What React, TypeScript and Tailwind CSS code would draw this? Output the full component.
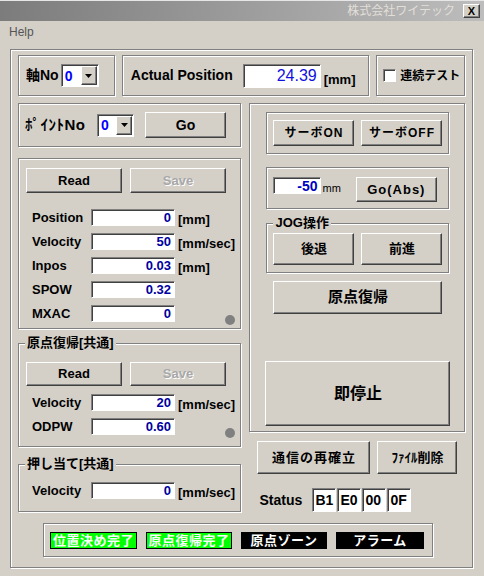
import React from 'react';

const etched = 'border border-[#808080] shadow-[inset_1px_1px_0_#fff,1px_1px_0_#fff]';
const raised =
  'border border-t-white border-l-white border-r-[#404040] border-b-[#404040] shadow-[inset_-1px_-1px_0_#808080] bg-[#d4d0c8]';
const sunken =
  'border border-t-[#808080] border-l-[#808080] border-r-white border-b-white shadow-[inset_1px_1px_0_#404040] bg-white';

type Props = { className?: string; children?: React.ReactNode };

const Group: React.FC<Props & { title?: string }> = ({ title, className = '', children }) => (
  <div className={`relative ${etched} ${className}`}>
    {title && (
      <span className="absolute -top-[8px] left-[6px] bg-[#d4d0c8] px-[2px] text-[13px] leading-[14px] font-bold whitespace-nowrap">
        {title}
      </span>
    )}
    {children}
  </div>
);

const Btn: React.FC<Props & { disabled?: boolean }> = ({ className = '', disabled, children }) => (
  <div
    className={`${raised} flex items-center justify-center font-bold whitespace-nowrap ${
      disabled ? 'text-[#a8a8a8] [text-shadow:1px_1px_0_#fff]' : 'text-black'
    } ${className}`}
  >
    {children}
  </div>
);

const Field: React.FC<Props> = ({ className = '', children }) => (
  <div
    className={`${sunken} flex items-center justify-end pr-[3px] font-bold text-[#0000a0] text-[13px] leading-none ${className}`}
  >
    {children}
  </div>
);

const Combo: React.FC<Props> = ({ className = '' }) => (
  <div className={`${sunken} flex items-stretch p-[1px] ${className}`}>
    <div className="flex-1 flex items-center pl-[2px] text-[14px] font-bold text-[#0000ff] leading-none">0</div>
    <div className={`${raised} w-[16px] flex items-center justify-center`}>
      <svg width="7" height="4" viewBox="0 0 7 4">
        <polygon points="0,0 7,0 3.5,4" fill="#000" />
      </svg>
    </div>
  </div>
);

const ParamRow: React.FC<{ label: string; value: string; unit?: string; dot?: boolean }> = ({
  label,
  value,
  unit,
  dot,
}) => (
  <div className="flex items-center h-[17px]">
    <span className="w-[59px] pl-[13px] box-content text-[13px] font-bold leading-none">{label}</span>
    <Field className="w-[84px] h-[17px]">{value}</Field>
    {unit && <span className="ml-[3px] text-[13px] font-bold leading-none mt-[3px]">{unit}</span>}
    {dot && <span className="ml-auto mr-[5px] mt-[12px] w-[10px] h-[10px] rounded-full bg-[#808080]" />}
  </div>
);

const Indicator: React.FC<Props & { on?: boolean }> = ({ on, className = '', children }) => (
  <div
    className={`h-[17px] flex items-center justify-center border border-black text-white text-[13px] font-bold tracking-[0.5px] leading-none whitespace-nowrap ${
      on ? 'bg-[#00ff00]' : 'bg-black'
    } ${className}`}
  >
    {children}
  </div>
);

export default function App() {
  return (
    <div className="w-[484px] h-[576px] overflow-hidden bg-[#d4d0c8] text-black font-['Liberation_Sans','Noto_Sans_CJK_JP',sans-serif]">
      {/* title bar */}
      <div className="h-[21px] border-t border-[#e6e6e6] bg-linear-to-r from-[#7c7c7c] to-[#bdbdbd] flex items-center justify-end pr-[4px]">
        <span className="text-[12px] text-[#e2dfd8] mr-[8px] leading-none">株式会社ワイテック</span>
        <div className={`${raised} w-[17px] h-[14px] flex items-center justify-center text-[11px] font-bold leading-none`}>
          X
        </div>
      </div>
      {/* menu */}
      <div className="h-[21px] flex items-center pl-[9px] text-[12px] text-[#555]">Help</div>

      {/* main frame */}
      <div className={`ml-[10px] mt-[7px] w-[463px] h-[519px] pt-[5px] px-[7px] ${etched}`}>
        {/* top row */}
        <div className="flex gap-[7px] h-[41px]">
          <Group className="w-[97px] flex items-center pl-[7px]">
            <span className="text-[14px] font-bold">軸No</span>
            <Combo className="ml-[2px] w-[38px] h-[23px]" />
          </Group>
          <Group className="w-[248px] flex items-center pl-[8px]">
            <span className="text-[14px] font-bold">Actual Position</span>
            <div
              className={`${sunken} ml-[10px] w-[78px] h-[24px] flex items-center justify-end pr-[3px] text-[16px] text-[#1010e0] leading-none`}
            >
              24.39
            </div>
            <span className="ml-[3px] mt-[8px] text-[13px] font-bold">[mm]</span>
          </Group>
          <Group className="w-[89px] flex items-center pl-[6px]">
            <span className={`${sunken} w-[13px] h-[13px] shrink-0`} />
            <span className="ml-[4px] text-[12px] font-bold whitespace-nowrap">連続テスト</span>
          </Group>
        </div>

        <div className="flex gap-[8px] mt-[7px]">
          {/* left column */}
          <div className="w-[224px] flex flex-col">
            <Group className="h-[44px] flex items-center pl-[6px]">
              <span className="w-[72px] text-[15px] font-bold tracking-[0.5px] whitespace-nowrap">ﾎﾟｲﾝﾄNo</span>
              <Combo className="w-[37px] h-[23px]" />
              <Btn className="ml-[11px] w-[81px] h-[26px] text-[14px]">Go</Btn>
            </Group>

            <Group className="mt-[11px] h-[171px] pt-[9px]">
              <div className="flex gap-[8px] pl-[7px]">
                <Btn className="w-[96px] h-[25px] text-[13px]">Read</Btn>
                <Btn disabled className="w-[96px] h-[25px] text-[13px]">
                  Save
                </Btn>
              </div>
              <div className="mt-[16px] flex flex-col gap-[7px]">
                <ParamRow label="Position" value="0" unit="[mm]" />
                <ParamRow label="Velocity" value="50" unit="[mm/sec]" />
                <ParamRow label="Inpos" value="0.03" unit="[mm]" />
                <ParamRow label="SPOW" value="0.32" />
                <ParamRow label="MXAC" value="0" dot />
              </div>
            </Group>

            <Group title="原点復帰[共通]" className="mt-[14px] h-[104px] pt-[18px]">
              <div className="flex gap-[8px] pl-[7px]">
                <Btn className="w-[96px] h-[24px] text-[13px]">Read</Btn>
                <Btn disabled className="w-[96px] h-[24px] text-[13px]">
                  Save
                </Btn>
              </div>
              <div className="mt-[8px] flex flex-col gap-[7px]">
                <ParamRow label="Velocity" value="20" unit="[mm/sec]" />
                <ParamRow label="ODPW" value="0.60" dot />
              </div>
            </Group>

            <Group title="押し当て[共通]" className="mt-[17px] h-[48px] pt-[17px]">
              <ParamRow label="Velocity" value="0" unit="[mm/sec]" />
            </Group>
          </div>

          {/* right column */}
          <div className="w-[216px] flex flex-col">
            <Group className="h-[329px] pt-[8px] flex flex-col">
              <Group className="ml-[16px] w-[183px] h-[42px] flex items-center gap-[7px] pl-[6px]">
                <Btn className="w-[81px] h-[26px] text-[12px] tracking-[1px]">サーボON</Btn>
                <Btn className="w-[81px] h-[26px] text-[12px] tracking-[1px]">サーボOFF</Btn>
              </Group>

              <Group className="ml-[16px] mt-[13px] w-[183px] h-[42px] flex items-start pt-[9px] pl-[6px]">
                <div
                  className={`${sunken} w-[48px] h-[17px] flex items-center justify-end pr-[3px] text-[14px] font-bold text-[#0000c0] leading-none`}
                >
                  -50
                </div>
                <span className="mt-[6px] ml-[1px] text-[11px] leading-none">mm</span>
                <Btn className="ml-[15px] w-[81px] h-[25px] text-[13px] tracking-[1px]">Go(Abs)</Btn>
              </Group>

              <Group
                title="JOG操作"
                className="ml-[16px] mt-[14px] w-[183px] h-[50px] flex items-start gap-[7px] pt-[9px] pl-[6px]"
              >
                <Btn className="w-[81px] h-[32px] text-[13px]">後退</Btn>
                <Btn className="w-[81px] h-[32px] text-[13px]">前進</Btn>
              </Group>

              <Btn className="ml-[23px] mt-[8px] w-[169px] h-[33px] text-[15px]">原点復帰</Btn>

              <Btn className="ml-[15px] mt-[47px] w-[185px] h-[65px] text-[16px]">即停止</Btn>
            </Group>

            <div className="mt-[9px] flex gap-[7px] pl-[8px]">
              <Btn className="w-[113px] h-[33px] text-[13px] tracking-[1px]">通信の再確立</Btn>
              <Btn className="w-[80px] h-[33px] text-[13px]">ﾌｧｲﾙ削除</Btn>
            </div>

            <div className="mt-[14px] h-[24px] flex items-center pl-[10px]">
              <span className="w-[53px] text-[14px] font-bold">Status</span>
              <div className="flex gap-[1px]">
                {['B1', 'E0', '00', '0F'].map((v) => (
                  <div
                    key={v}
                    className={`${sunken} w-[24px] h-[24px] flex items-center pl-[2px] text-[14px] font-bold leading-none`}
                  >
                    {v}
                  </div>
                ))}
              </div>
            </div>
          </div>
        </div>

        {/* bottom status */}
        <Group className="mt-[11px] ml-[25px] w-[390px] h-[34px] flex items-center pl-[6px] gap-[9px]">
          <Indicator on className="w-[87px]">
            位置決め完了
          </Indicator>
          <Indicator on className="w-[86px]">
            原点復帰完了
          </Indicator>
          <Indicator className="w-[86px]">原点ゾーン</Indicator>
          <Indicator className="w-[88px]">アラーム</Indicator>
        </Group>
      </div>
    </div>
  );
}
